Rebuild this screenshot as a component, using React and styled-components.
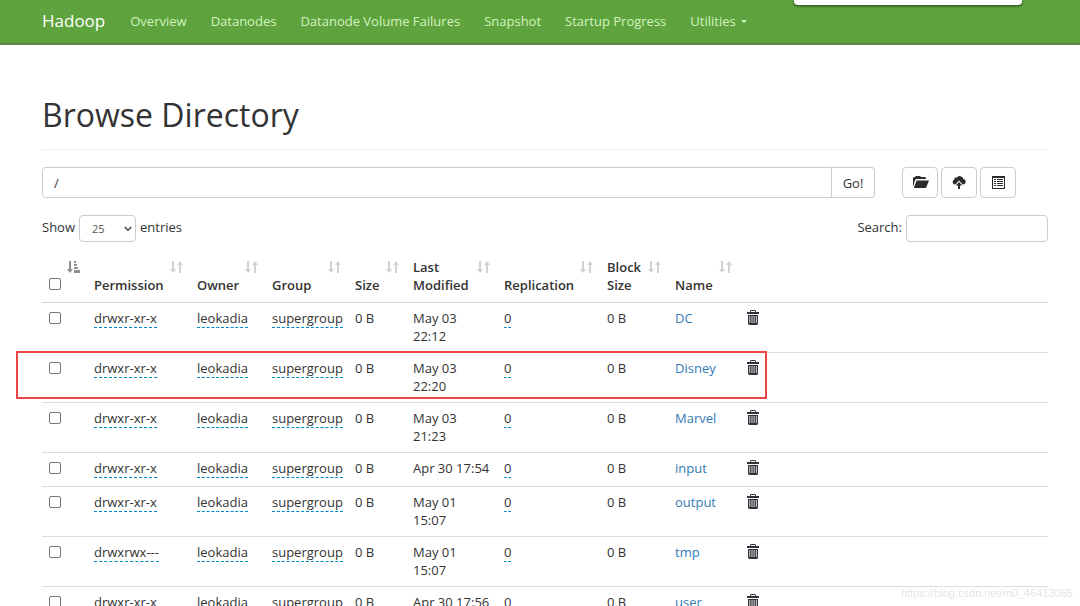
/**
 * Explorer
 *
 * The HDFS file browser: navbar, path form, and the directory listing
 */

import React from 'react';
import styled, { createGlobalStyle, css } from 'styled-components';

const GlobalStyle = createGlobalStyle`
  *, *::before, *::after {
    box-sizing: border-box;
  }

  body {
    margin: 0;
    background: #fff;
    color: #333;
    font: 13px/18px 'Open Sans', 'Noto Sans', sans-serif;
    scrollbar-width: none;
  }

  button, input, select {
    font: inherit;
    color: inherit;
  }
`;

const Navbar = styled.nav`
  display: flex;
  align-items: center;
  height: 45px;
  padding: 0 42px 2px;
  background: #5fa33e;
  border-bottom: 2px solid #5c8444;
`;

const Brand = styled.a`
  margin-right: 25px;
  color: #fff;
  font-size: 17px;
  text-decoration: none;
`;

const NavList = styled.ul`
  display: flex;
  gap: 24px;
  margin: 0;
  padding: 0;
  list-style: none;
`;

const NavLink = styled.a`
  display: flex;
  align-items: center;
  gap: 5px;
  color: #d2f3bf;
  text-decoration: none;
  white-space: nowrap;
`;

const Caret = styled.span`
  margin-top: 2px;
  border-top: 3px solid;
  border-left: 3px solid transparent;
  border-right: 3px solid transparent;
`;

const Popup = styled.div`
  position: absolute;
  top: 0;
  right: 58px;
  width: 228px;
  height: 5px;
  background: #fff;
  border-radius: 0 0 4px 4px;
  box-shadow: 0 1px 3px rgba(0, 0, 0, 0.6);
`;

const Container = styled.main`
  padding: 48px 32px 0 42px;
`;

const Title = styled.h1`
  margin: 0 0 17px;
  padding-bottom: 12px;
  border-bottom: 1px solid #eee;
  font-size: 32px;
  font-weight: 400;
  line-height: 44px;
`;

const Toolbar = styled.div`
  display: grid;
  grid-template-columns: 1fr 146px;
  gap: 27px;
`;

const PathForm = styled.form`
  display: flex;
`;

const field = css`
  background: #fff;
  border: 1px solid #ccc;
  border-radius: 4px;
`;

const PathInput = styled.input`
  ${field}
  flex: 1;
  min-width: 0;
  height: 31px;
  padding: 0 11px;
  border-radius: 4px 0 0 4px;
`;

const GoButton = styled.button`
  ${field}
  width: 43px;
  padding: 0;
  border-left: 0;
  border-radius: 0 4px 4px 0;
`;

const Tools = styled.div`
  display: flex;
  gap: 3px;
`;

const ToolButton = styled.button`
  ${field}
  display: flex;
  align-items: center;
  justify-content: center;
  width: 36px;
  height: 31px;
  padding: 0;
`;

const Filters = styled.div`
  display: flex;
  justify-content: space-between;
  margin-top: 17px;
`;

const FilterLabel = styled.label`
  display: flex;
  gap: 4px;
  line-height: 24px;
`;

const LengthSelect = styled.span`
  position: relative;

  svg {
    position: absolute;
    top: 11px;
    right: 4px;
    pointer-events: none;
  }
`;

const Select = styled.select`
  ${field}
  display: block;
  width: 57px;
  height: 27px;
  padding: 0 12px;
  font-size: 11px;
  color: #555;
  appearance: none;
`;

const SearchInput = styled.input`
  ${field}
  width: 142px;
  height: 27px;
  padding: 0 9px;
`;

const Table = styled.table`
  width: 100%;
  margin-top: 9px;
  border-collapse: separate;
  border-spacing: 0;
  table-layout: fixed;
`;

const Col = styled.col`
  width: ${(props) => props.$width};
`;

const Th = styled.th`
  position: relative;
  padding: 7px 24px 8px 7px;
  border-bottom: 1px solid #d4d4d4;
  font-weight: 600;
  text-align: left;
  vertical-align: bottom;

  svg {
    position: absolute;
    top: 10px;
    right: 7px;
  }
`;

const Row = styled.tr`
  position: relative;
`;

const Td = styled.td`
  height: 34px;
  padding: 6px 7px 7px;
  border-bottom: 1px solid #ddd;
  vertical-align: top;
`;

const Check = styled.input`
  display: block;
  width: 12px;
  height: 12px;
  margin: 3px 0 4px;
  background: #fff;
  border: 1px solid #767676;
  border-radius: 2px;
  appearance: none;

  &:checked {
    background: #337ab7;
  }
`;

const Editable = styled.span`
  border-bottom: 1px dashed #0088cc;
`;

const FileLink = styled.a`
  color: #337ab7;
  text-decoration: none;
`;

const TrashButton = styled.button`
  display: block;
  padding: 1px;
  background: none;
  border: 0;

  svg {
    display: block;
  }
`;

const Highlight = styled.span`
  position: absolute;
  top: -2px;
  left: -26px;
  width: 751px;
  height: 48px;
  border: 2px solid #ed4545;
  pointer-events: none;
`;

const Watermark = styled.div`
  position: fixed;
  right: 7px;
  bottom: 4px;
  color: #e4e4e4;
  font: 11px/18px 'Liberation Sans', sans-serif;
`;

const ArrowsIcon = () => (
  <svg width="13" height="12" viewBox="0 0 13 12" fill="#d2d2d2" aria-hidden="true">
    <path d="M2 0h2v8h2L3 12 0 8h2zM9 12h2V4h2L10 0 7 4h2z" />
  </svg>
);

const SortedIcon = () => (
  <svg width="13" height="12" viewBox="0 0 13 12" fill="#8f8f8f" aria-hidden="true">
    <path d="M2 0h2v8h2L3 12 0 8h2zM7 0h2v2H7zM7 3h3v2H7zM7 6h4v2H7zM7 9h6v3H7z" />
  </svg>
);

const FolderIcon = () => (
  <svg width="17" height="13" viewBox="0 0 17 13" fill="#2b2b2f" aria-hidden="true">
    <path d="M1 10V2l1-1h1l1-1h4l1 1h4l1 1v1H4.5L3 4 1.4 10z" />
    <path d="M4.6 4.4H17L14 12H1.8z" />
  </svg>
);

const UploadIcon = () => (
  <svg width="14" height="13" viewBox="0 0 14 13" aria-hidden="true">
    <path
      fill="#2b2b2f"
      d="M3 8.5a2.5 2.5 0 0 1-.8-4.8A2.2 2.2 0 0 1 4.7 1.6 3.8 3.8 0 0 1 11.4 3a2.8 2.8 0 0 1 .1 5.5h-.8L7 4.6 3.3 8.5z"
    />
    <path fill="#2b2b2f" d="M7 6l3.2 3.5H8V13H6V9.5H3.8z" />
  </svg>
);

const ListIcon = () => (
  <svg width="13" height="13" viewBox="0 0 13 13" fill="#2b2b2f" aria-hidden="true">
    <path
      fillRule="evenodd"
      d="M0 0h13v13H0zM1 2v10h11V2zM2 3h2v1H2zM5 3h6v1H5zM2 5h2v1H2zM5 5h6v1H5zM2 7h2v1H2zM5 7h6v1H5zM2 9h2v1H2zM5 9h6v1H5z"
    />
  </svg>
);

const TrashIcon = () => (
  <svg width="12" height="15" viewBox="0 0 12 15" fill="#33333b" aria-hidden="true">
    <path
      fillRule="evenodd"
      d="M0 4V2h3V1l1-1h4l1 1v1h3v2H0zM4 1v1h4V1zM1 5h10v9l-1 1H2l-1-1zM2.4 6v7h.8V6zM4.6 6v7h.8V6zM6.700 6v7h.8V6zM8.900 6v7h.8V6z"
    />
  </svg>
);

const ChevronIcon = () => (
  <svg width="8" height="6" viewBox="0 0 8 6" fill="none" stroke="#444" strokeWidth="1.5" aria-hidden="true">
    <path d="M.7 1L4 4.3 7.3 1" />
  </svg>
);

const links = ['Overview', 'Datanodes', 'Datanode Volume Failures', 'Snapshot', 'Startup Progress'];

const widths = ['45px', '103px', '75px', '83px', '58px', '91px', '103px', '68px', '71px', 'auto'];

const columns = ['Permission', 'Owner', 'Group', 'Size', 'Last Modified', 'Replication', 'Block Size', 'Name'];

const files = [
  { name: 'DC', permission: 'drwxr-xr-x', modified: 'May 03 22:12' },
  { name: 'Disney', permission: 'drwxr-xr-x', modified: 'May 03 22:20', marked: true },
  { name: 'Marvel', permission: 'drwxr-xr-x', modified: 'May 03 21:23' },
  { name: 'input', permission: 'drwxr-xr-x', modified: 'Apr 30 17:54' },
  { name: 'output', permission: 'drwxr-xr-x', modified: 'May 01 15:07' },
  { name: 'tmp', permission: 'drwxrwx---', modified: 'May 01 15:07' },
  { name: 'user', permission: 'drwxr-xr-x', modified: 'Apr 30 17:56' },
];

const FileRow = ({ file }) => (
  <Row>
    <Td>
      <Check type="checkbox" aria-label={`Select ${file.name}`} />
      {file.marked && <Highlight />}
    </Td>
    <Td><Editable>{file.permission}</Editable></Td>
    <Td><Editable>leokadia</Editable></Td>
    <Td><Editable>supergroup</Editable></Td>
    <Td>0 B</Td>
    <Td>{file.modified}</Td>
    <Td><Editable>0</Editable></Td>
    <Td>0 B</Td>
    <Td><FileLink href={`#/${file.name}`}>{file.name}</FileLink></Td>
    <Td>
      <TrashButton type="button" aria-label={`Delete ${file.name}`}><TrashIcon /></TrashButton>
    </Td>
  </Row>
);

export default function App() {
  return (
    <>
      <GlobalStyle />
      <Navbar>
        <Brand href="#hadoop">Hadoop</Brand>
        <NavList>
          {links.map((link) => (
            <li key={link}><NavLink href="#overview">{link}</NavLink></li>
          ))}
          <li><NavLink href="#utilities">Utilities<Caret /></NavLink></li>
        </NavList>
        <Popup />
      </Navbar>
      <Container>
        <Title>Browse Directory</Title>
        <Toolbar>
          <PathForm onSubmit={(e) => e.preventDefault()}>
            <PathInput type="text" defaultValue="/" aria-label="Directory" />
            <GoButton type="submit">Go!</GoButton>
          </PathForm>
          <Tools>
            <ToolButton type="button" aria-label="Create directory"><FolderIcon /></ToolButton>
            <ToolButton type="button" aria-label="Upload files"><UploadIcon /></ToolButton>
            <ToolButton type="button" aria-label="Cut and paste"><ListIcon /></ToolButton>
          </Tools>
        </Toolbar>
        <Filters>
          <FilterLabel htmlFor="length">
            Show
            <LengthSelect>
              <Select id="length" defaultValue="25">
                <option>25</option>
                <option>50</option>
                <option>100</option>
              </Select>
              <ChevronIcon />
            </LengthSelect>
            entries
          </FilterLabel>
          <FilterLabel htmlFor="search">
            Search:
            <SearchInput id="search" type="search" />
          </FilterLabel>
        </Filters>
        <Table>
          <colgroup>
            {widths.map((width, i) => <Col key={i} $width={width} />)}
          </colgroup>
          <thead>
            <tr>
              <Th>
                <Check type="checkbox" aria-label="Select all" />
                <SortedIcon />
              </Th>
              {columns.map((column) => (
                <Th key={column}>{column}<ArrowsIcon /></Th>
              ))}
              <Th />
            </tr>
          </thead>
          <tbody>
            {files.map((file) => <FileRow key={file.name} file={file} />)}
          </tbody>
        </Table>
      </Container>
      <Watermark>https://blog.csdn.net/m0_46413065</Watermark>
    </>
  );
}
